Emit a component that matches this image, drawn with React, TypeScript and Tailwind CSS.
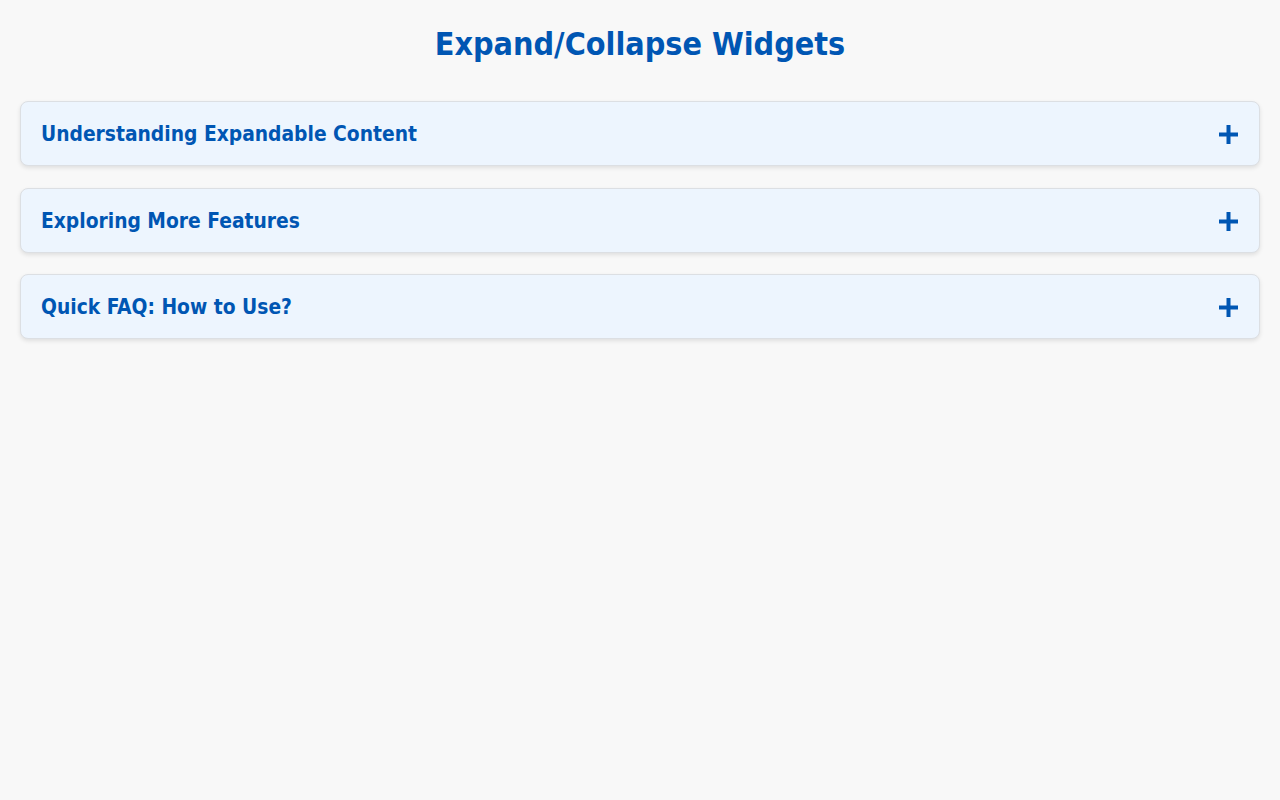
const items = [
  "Understanding Expandable Content",
  "Exploring More Features",
  "Quick FAQ: How to Use?",
];

function PlusIcon() {
  return (
    <svg width="19" height="19" viewBox="0 0 19 19" fill="currentColor" aria-hidden="true" className="mr-[1px]">
      <rect x="7.5" y="0" width="4" height="19" />
      <rect x="0" y="7.5" width="19" height="4" />
    </svg>
  );
}

export default function App() {
  return (
    <div
      className="min-h-[800px] bg-[#f8f8f8] px-5 pt-[26px] text-[#0056b3]"
      style={{ fontFamily: '"DejaVu Sans Condensed", "DejaVu Sans", Verdana, sans-serif' }}
    >
      <h1 className="mb-[38px] text-center text-[32px] font-bold leading-[1.164]">Expand/Collapse Widgets</h1>
      <div className="flex flex-col gap-[21.5px]">
        {items.map((title) => (
          <div
            key={title}
            className="flex items-center justify-between rounded-lg border border-[#dcdfe3] bg-[#edf5fe] px-5 pb-[19px] pt-[21px] shadow-[0_2px_4px_rgba(0,0,0,0.1)]"
          >
            <h2 className="text-[20.8px] font-bold leading-[23px]">{title}</h2>
            <PlusIcon />
          </div>
        ))}
      </div>
    </div>
  );
}
